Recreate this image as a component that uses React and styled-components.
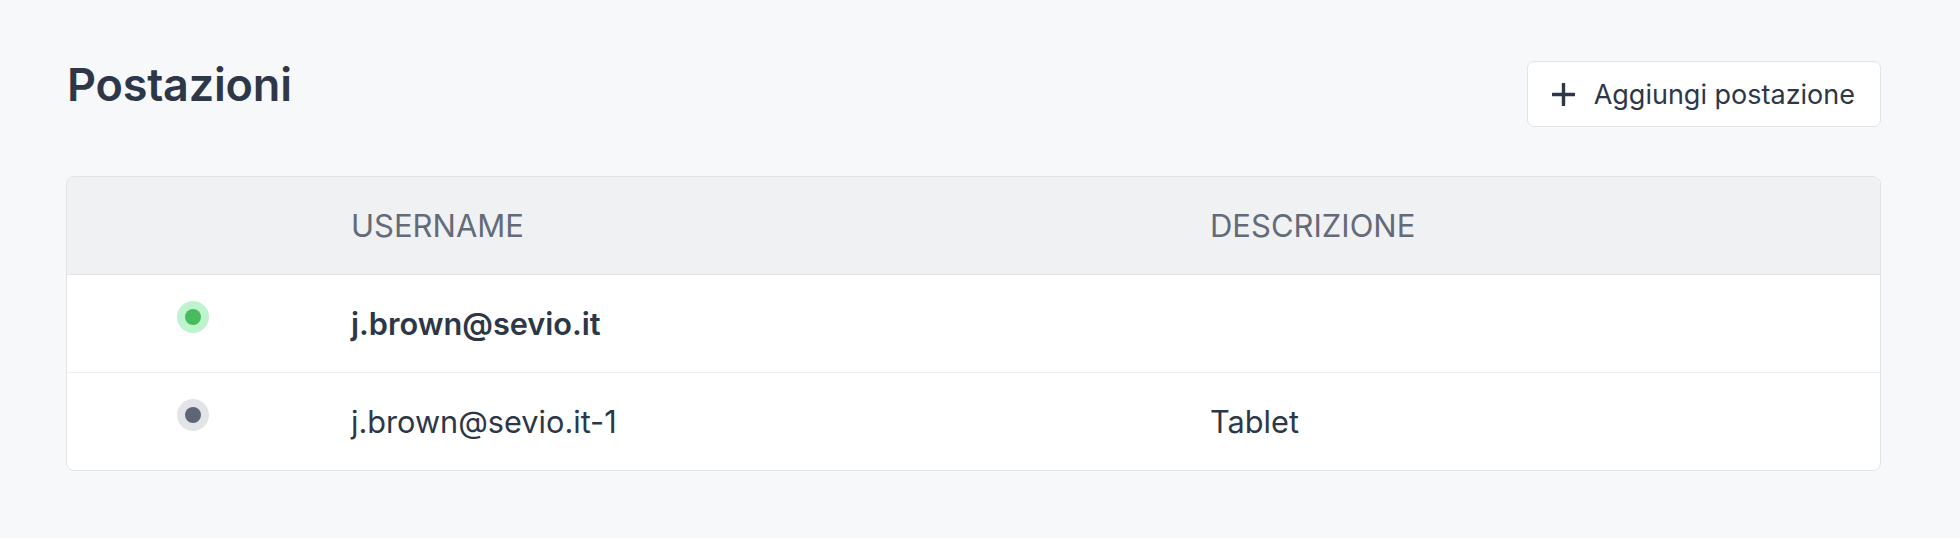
import styled, { createGlobalStyle } from "styled-components";

const GlobalStyle = createGlobalStyle`
    html, body {
        margin: 0;
        padding: 0;
        background: #f7f8fa;
        font-family: Inter, "Noto Sans", sans-serif;
        color: #2d3748;
    }
`;

const stations = [
    { username: "j.brown@sevio.it", description: "", online: true },
    { username: "j.brown@sevio.it-1", description: "Tablet", online: false },
];

export default function App() {
    return (
        <>
            <GlobalStyle />
            <Page>
                <TopBar>
                    <Title>Postazioni</Title>
                    <AddButton type="button">
                        <PlusIcon />
                        Aggiungi postazione
                    </AddButton>
                </TopBar>
                <Table>
                    <HeadRow>
                        <Cell />
                        <HeadCell>Username</HeadCell>
                        <HeadCell>Descrizione</HeadCell>
                    </HeadRow>
                    {stations.map((station) => (
                        <Row key={station.username}>
                            <DotCell>
                                <Status $online={station.online} />
                            </DotCell>
                            <Cell $bold={station.online}>{station.username}</Cell>
                            <Cell>{station.description}</Cell>
                        </Row>
                    ))}
                </Table>
            </Page>
        </>
    );
}

const PlusIcon = () => (
    <svg width="23" height="23" viewBox="0 0 23 23" fill="none">
        <path
            d="M11.5 1v21M1 11.5h21"
            stroke="#2d3748"
            strokeWidth="3.4"
            strokeLinecap="round"
        />
    </svg>
);

const Page = styled.div`
    padding: 61px 79px 40px 66px;
`;

const TopBar = styled.div`
    display: flex;
    justify-content: space-between;
    align-items: flex-start;
    margin-bottom: 49px;
`;

const Title = styled.h1`
    margin: 1px 0 0 1px;
    font-size: 45px;
    line-height: 46px;
    font-weight: 600;
    color: #2d3748;
    letter-spacing: -0.2px;
`;

const AddButton = styled.button`
    display: flex;
    align-items: center;
    gap: 19px;
    height: 66px;
    padding: 0 25px 0 24px;
    background: #ffffff;
    border: 1.5px solid #e1e3e7;
    border-radius: 7px;
    font-family: Inter, "Noto Sans", sans-serif;
    font-size: 27px;
    color: #2d3748;
    cursor: pointer;
`;

const Table = styled.div`
    background: #ffffff;
    border: 1px solid #e1e3e7;
    border-radius: 8px;
    overflow: hidden;
`;

const Row = styled.div`
    display: grid;
    grid-template-columns: 284px 859px 1fr;
    align-items: center;
    height: 97px;
    border-bottom: 1px solid #eeeff1;
    &:last-child {
        border-bottom: none;
    }
`;

const HeadRow = styled(Row)`
    background: #f0f1f3;
    border-bottom: 1px solid #e1e3e7;
`;

const Cell = styled.div`
    font-size: 30.7px;
    font-weight: ${(p) => (p.$bold ? 600 : 400)};
    color: #2d3748;
`;

const HeadCell = styled.div`
    font-size: 31px;
    font-weight: 400;
    text-transform: uppercase;
    color: #646b78;
`;

const DotCell = styled.div`
    padding-left: 110px;
    display: flex;
    margin-bottom: 14px;
`;

const Status = styled.span`
    width: 32px;
    height: 32px;
    border-radius: 50%;
    background: ${(p) => (p.$online ? "#bdf3cd" : "#e3e4e8")};
    display: flex;
    align-items: center;
    justify-content: center;
    &::after {
        content: "";
        width: 16px;
        height: 16px;
        border-radius: 50%;
        background: ${(p) => (p.$online ? "#4aba5f" : "#5e6574")};
    }
`;
